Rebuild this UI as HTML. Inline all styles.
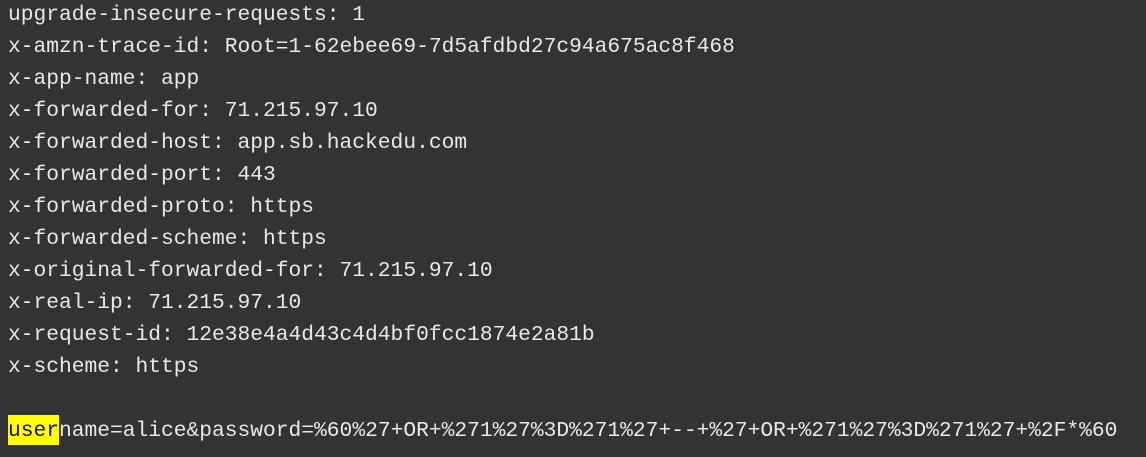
<!DOCTYPE html>
<html><head><meta charset="utf-8"><style>
html,body{margin:0;padding:0;background:#333333;width:1146px;height:457px;overflow:hidden}
pre{margin:0;position:absolute;left:8px;top:-1px;font-family:"Liberation Mono",monospace;font-size:21.25px;line-height:32px;color:#e8e8e8;white-space:pre}
.h{background:#ffff00;color:#111;padding:4px 0 2px}
</style></head><body><pre>upgrade-insecure-requests: 1
x-amzn-trace-id: Root=1-62ebee69-7d5afdbd27c94a675ac8f468
x-app-name: app
x-forwarded-for: 71.215.97.10
x-forwarded-host: app.sb.hackedu.com
x-forwarded-port: 443
x-forwarded-proto: https
x-forwarded-scheme: https
x-original-forwarded-for: 71.215.97.10
x-real-ip: 71.215.97.10
x-request-id: 12e38e4a4d43c4d4bf0fcc1874e2a81b
x-scheme: https

<span class="h">user</span>name=alice&amp;password=%60%27+OR+%271%27%3D%271%27+--+%27+OR+%271%27%3D%271%27+%2F*%60</pre></body></html>
